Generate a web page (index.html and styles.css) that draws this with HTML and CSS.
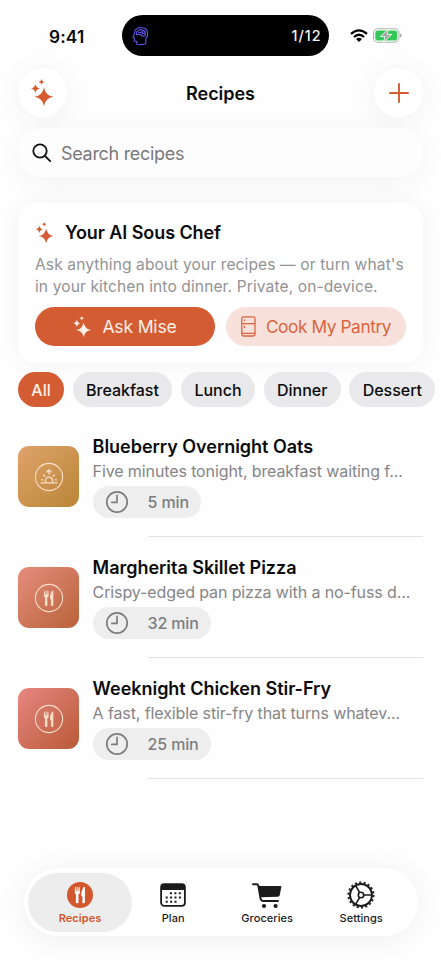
FILE: index.html
```html
<!DOCTYPE html>
<html lang="en">
<head>
<meta charset="utf-8">
<title>Recipes</title>
<link rel="stylesheet" href="styles.css">
</head>
<body>
<svg class="defs" width="0" height="0" aria-hidden="true">
  <symbol id="sparkles" viewBox="0 0 24 28">
    <path d="M13.5 8.5Q14.9 17.1 23.5 18.5Q14.9 19.9 13.5 28Q12.1 19.9 3.5 18.5Q12.1 17.1 13.5 8.5Z"/>
    <path d="M4.6 5Q5.3 9.1 9.4 9.8Q5.3 10.5 4.6 14.6Q3.9 10.5 0 9.8Q3.9 9.1 4.6 5Z"/>
    <path d="M11 0Q11.4 2.6 14 3Q11.4 3.4 11 6Q10.6 3.4 8 3Q10.6 2.6 11 0Z"/>
  </symbol>
  <symbol id="cutlery" viewBox="0 0 12 18">
    <path d="M.3 .6Q.4 0 .8 0T1.3.6L1.5 4.8H2.2L2.4.5Q2.8-.2 3.2.5L3.4 4.8H4.1L4.3.6Q4.4 0 4.8 0T5.3.6L5.7 6Q5.7 7.8 4 8.4L4.3 16.8Q4.2 18 2.8 18T1.3 16.8L1.6 8.4Q0 7.8 0 6Z"/>
    <path d="M11 .4V16.8Q11 18 9.6 18T8.2 16.8L8.5 10.8L7.1 9.8Q7 3.5 10 .3Q10.8-.2 11 .4Z"/>
  </symbol>
  <symbol id="clock" viewBox="0 0 24 24">
    <g fill="none" stroke="currentColor" stroke-width="1.7" stroke-linecap="round" stroke-linejoin="round"><circle cx="12" cy="12" r="10.2"/><path d="M12 5.4V12.4H6.8"/></g>
  </symbol>
</svg>
<div class="screen">
  <div class="status">
    <span class="time">9:41</span>
    <div class="island">
      <svg class="brain" viewBox="0 0 18 20" fill="none" stroke="#5b50d6" stroke-width="1.3" stroke-linejoin="round" stroke-linecap="round">
        <path d="M5 18.5V15.6H3.6Q2.4 15.6 2.4 14.4V11.8L1.1 11.2L2.4 8.2Q2.4 1.2 9.4 1.2Q16.6 1.2 16.6 8.2Q16.6 11 14.6 13V18.2Q10 19.8 5 18.5Z"/>
        <path d="M5 8.2Q4 5 7 4.2Q9 2.4 11 4Q14.2 4 14.2 7.4Q14.4 10.2 11.8 10.2Q9.6 10 9.4 8.3H5M7 6.2H9.6M11 5V7.2H13.4"/>
      </svg>
      <span>1/12</span>
    </div>
    <svg class="wifi" viewBox="0 0 18 13">
      <g fill="none" stroke="#000" stroke-width="2.2"><path d="M1 4.9Q9-2.3 17 4.9"/><path d="M3.9 8Q9 3.5 14.1 8"/></g><path d="M6 10.1Q9 7.6 12 10.1L9 13Z"/>
    </svg>
    <svg class="battery" viewBox="0 0 29 15">
      <rect x=".6" y=".8" width="25.4" height="13.4" rx="4.4" fill="#fff" stroke="#a9b7ac" stroke-width="1.1"/>
      <rect x="2.3" y="2.5" width="22" height="10" rx="2.8" fill="#34c759"/>
      <path d="M27 5.3Q28.6 6 28.6 7.5T27 9.7Z" fill="#aaa"/>
      <path d="M15.6.7L7.4 8.6H12L10.4 14.3L18.7 6.4H14.1Z" fill="#a5a5a5" stroke="#fff" stroke-width=".8"/>
    </svg>
  </div>
  <header class="header">
    <button class="round"><svg class="spark-lg"><use href="#sparkles"/></svg></button>
    <h1>Recipes</h1>
    <button class="round"><svg class="plus" viewBox="0 0 20 20"><path d="M10 1V19M1 10H19" stroke="currentColor" stroke-width="1.9" stroke-linecap="round"/></svg></button>
  </header>
  <div class="search">
    <svg viewBox="0 0 20 20" fill="none" stroke="#111" stroke-width="1.8" stroke-linecap="round"><circle cx="8" cy="8" r="6.7"/><path d="M13 13L18.2 18.2"/></svg>
    <span>Search recipes</span>
  </div>
  <section class="card">
    <div class="card-head"><svg><use href="#sparkles"/></svg><h2>Your AI Sous Chef</h2></div>
    <p>Ask anything about your recipes — or turn what's<br>in your kitchen into dinner. Private, on-device.</p>
    <div class="actions">
      <button class="ask"><svg><use href="#sparkles"/></svg><span>Ask Mise</span></button>
      <button class="pantry"><svg viewBox="0 0 15 21" fill="none" stroke="currentColor" stroke-width="1.3"><rect x=".8" y=".8" width="13.2" height="19.2" rx="1.8"/><path d="M1 7.6H14M1 17.4H14M3.5 3.5V5M3.5 9.7V12"/></svg><span>Cook My Pantry</span></button>
    </div>
  </section>
  <nav class="chips">
    <span class="chip on">All</span><span class="chip breakfast">Breakfast</span><span class="chip lunch">Lunch</span><span class="chip dinner">Dinner</span><span class="chip dessert">Dessert</span>
  </nav>
  <main class="list">
    <article class="row">
      <div class="thumb gold"><svg viewBox="0 0 30 30" fill="none" stroke="currentColor" stroke-width="1.1" stroke-linecap="round"><circle cx="15" cy="15" r="13.6"/><path stroke-width="1.3" d="M7 20.9H23M11.5 20.4V18.7A3.5 3.5 0 0 1 18.5 18.7V20.4M15 12V8.3M12.8 10L15 7.9L17.2 10M9.5 12.9L10.9 14.3M20.5 12.9L19.1 14.3M7.5 17.8H9M21 17.8H22.5"/></svg></div>
      <div class="info"><h3>Blueberry Overnight Oats</h3><p>Five minutes tonight, breakfast waiting f...</p><div class="pill"><svg><use href="#clock"/></svg><span>5 min</span></div></div>
    </article>
    <article class="row">
      <div class="thumb coral"><svg viewBox="0 0 30 30"><circle cx="15" cy="15" r="13.6" fill="none" stroke="currentColor" stroke-width="1.1"/><use href="#cutlery" x="9.7" y="7.2" width="10.5" height="15.8" fill="currentColor"/></svg></div>
      <div class="info"><h3>Margherita Skillet Pizza</h3><p>Crispy-edged pan pizza with a no-fuss d...</p><div class="pill"><svg><use href="#clock"/></svg><span>32 min</span></div></div>
    </article>
    <article class="row">
      <div class="thumb red"><svg viewBox="0 0 30 30"><circle cx="15" cy="15" r="13.6" fill="none" stroke="currentColor" stroke-width="1.1"/><use href="#cutlery" x="9.7" y="7.2" width="10.5" height="15.8" fill="currentColor"/></svg></div>
      <div class="info"><h3>Weeknight Chicken Stir-Fry</h3><p>A fast, flexible stir-fry that turns whatev...</p><div class="pill"><svg><use href="#clock"/></svg><span>25 min</span></div></div>
    </article>
  </main>
  <nav class="tabs">
    <a class="tab active"><svg viewBox="0 0 28 28"><circle cx="14" cy="14" r="13" fill="currentColor"/><use href="#cutlery" x="8.5" y="5.6" width="11.4" height="17" fill="#fff"/></svg><span>Recipes</span></a>
    <a class="tab"><svg viewBox="0 0 28 28"><rect x="2.1" y="3.1" width="23.8" height="21.8" rx="3.2" fill="none" stroke="currentColor" stroke-width="1.8"/><path d="M2 9V5.5Q2 3 5 3H23Q26 3 26 5.5V9Z" fill="currentColor"/><g fill="none" stroke="currentColor" stroke-width="2" stroke-dasharray="2 2.4"><path d="M11 12.3H22M6.7 16.5H22M6.7 20.7H17.5"/></g></svg><span>Plan</span></a>
    <a class="tab"><svg class="cart" viewBox="0 0 30 28"><path d="M6.5 5H28.6Q29.5 5 29.3 6L27.8 14Q27.5 15.6 25.9 15.7L8.6 16.2Z" fill="currentColor"/><path d="M1 3.2H4.8Q6 3.2 6.3 4.5L8.5 17.3Q9 20 11.4 20H26" fill="none" stroke="currentColor" stroke-width="1.9" stroke-linecap="round"/><circle cx="12" cy="25" r="2.1" fill="currentColor"/><circle cx="23.6" cy="25" r="2.1" fill="currentColor"/></svg><span>Groceries</span></a>
    <a class="tab"><svg viewBox="0 0 28 28" fill="none" stroke="currentColor"><circle cx="14" cy="14" r="12.6" stroke-width="1.9" stroke-dasharray="2.1 2.298"/><circle cx="14" cy="14" r="11" stroke-width="1.9"/><circle cx="14" cy="14" r="2.7" stroke-width="1.6"/><path stroke-width="1.6" d="M16.6 14H24.5M12.7 11.7L8.8 4.9M12.7 16.3L8.8 23.1"/></svg><span>Settings</span></a>
  </nav>
</div>
</body>
</html>
```
FILE: styles.css
```css
* { box-sizing: border-box; margin: 0; padding: 0; }
body { width: 441px; height: 960px; overflow: hidden; background: #fefefe; font-family: Inter, "Liberation Sans", sans-serif; color: #0b0b0c; }
button { border: 0; background: none; font: inherit; color: inherit; }
svg { display: block; flex: none; }
span { white-space: nowrap; }
.defs { position: absolute; }
.screen { display: flex; flex-direction: column; width: 441px; height: 960px; }

.status { display: flex; align-items: center; height: 41px; margin-top: 15px; flex: none; }
.time { width: 73px; margin-left: 49px; padding-top: 1px; font-size: 17.3px; font-weight: 600; letter-spacing: .15px; }
.island { display: flex; align-items: center; justify-content: space-between; width: 207px; height: 41px; padding: 0 7.5px 0 10px; border-radius: 21px; background: #000; color: #f4f4f4; font-size: 14.3px; font-weight: 500; letter-spacing: 1px; }
.brain { width: 17px; height: 20px; }
.wifi { width: 18px; height: 13px; margin-left: 20.5px; }
.battery { width: 29px; height: 15px; margin-left: 5px; }

.header { display: flex; align-items: center; justify-content: space-between; height: 49px; margin: 12px 18px 0; flex: none; }
.round { display: grid; place-items: center; width: 49px; height: 49px; border-radius: 50%; background: #fff; color: #d45b32; fill: currentColor; box-shadow: 0 3px 30px rgba(0,0,0,.06); }
.spark-lg { width: 23px; height: 27px; }
.plus { width: 20px; height: 20px; }
h1 { font-size: 18px; font-weight: 600; letter-spacing: -.05px; line-height: 24px; padding-top: 2px; }

.search { display: flex; align-items: center; gap: 9px; height: 49px; margin: 11px 18px 0; padding-left: 14px; flex: none; border-radius: 25px; background: #fdfdfd; box-shadow: 0 4px 30px rgba(0,0,0,.05); color: #79797b; font-size: 18px; letter-spacing: -.3px; }
.search svg { width: 20px; height: 20px; }
.search span { padding-top: 1px; }

.card { height: 160px; margin: 26px 18px 0; padding: 18px 17px 0; flex: none; border-radius: 18px; background: #fff; box-shadow: 0 0 24px rgba(0,0,0,.05); }
.card-head { display: flex; align-items: center; gap: 10px; height: 23px; }
.card-head svg { width: 20px; height: 21px; fill: #d45b32; }
h2 { font-size: 18px; font-weight: 600; letter-spacing: -.08px; white-space: nowrap; }
.card p { height: 44px; margin-top: 10px; color: #939395; font-size: 15.6px; letter-spacing: .09px; line-height: 22px; white-space: nowrap; }
.actions { display: flex; gap: 11px; margin-top: 9px; }
.actions button { display: flex; align-items: center; justify-content: center; width: 180px; height: 39px; gap: 10px; border-radius: 20px; font-size: 17.6px; letter-spacing: -.2px; }
.ask { background: #d45c33; color: #fff0e8; fill: currentColor; }
.ask svg { width: 19px; height: 21px; }
.actions .pantry { background: #f8e1da; color: #d8653f; font-size: 17.3px; letter-spacing: -.42px; }
.pantry svg { width: 15px; height: 21px; }

.chips { display: flex; gap: 8.7px; height: 35px; margin: 9px 0 0 18px; flex: none; }
.chip { display: grid; place-items: center; flex: none; height: 35px; border-radius: 18px; background: #e9e9eb; font-size: 16px; font-weight: 500; letter-spacing: -.02px; }
.chip.on { width: 46px; background: #d45c33; color: #fff0e8; }
.breakfast { width: 99.6px; }
.lunch { width: 74px; }
.dinner { width: 77px; }
.dessert { width: 86px; }

.list { display: flex; flex-direction: column; margin: 9px 18px 0; }
.row { position: relative; display: flex; align-items: center; gap: 13.6px; height: 121px; }
.row::after { content: ""; position: absolute; left: 130px; right: 0; bottom: 0; height: 1px; background: #e3e3e4; }
.thumb { display: grid; place-items: center; width: 61px; height: 61px; border-radius: 11px; color: #f9dfc9; }
.thumb svg { width: 30px; height: 30px; }
.gold { background: linear-gradient(135deg, #dfa36b, #b98535); }
.coral { background: linear-gradient(135deg, #e58d7c, #b96239); }
.red { background: linear-gradient(135deg, #e78682, #b85a36); }
.info { flex: 1; height: 85px; }
h3 { height: 25px; padding-top: 1px; font-size: 18px; line-height: 24px; font-weight: 600; letter-spacing: -.03px; white-space: nowrap; }
.info p { height: 24px; color: #858587; font-size: 16px; line-height: 24px; letter-spacing: -.11px; white-space: nowrap; }
.pill { display: inline-flex; align-items: center; height: 32px; margin-top: 3px; padding: 0 12px; gap: 19px; border-radius: 16px; background: #eee; color: #7d7d7f; font-size: 16px; font-weight: 500; letter-spacing: -.15px; }
.pill svg { width: 24px; height: 24px; }

.tabs { display: flex; width: 394px; height: 68px; margin: auto 0 24px 24px; padding: 4.5px 4px; flex: none; border-radius: 34px; background: #fff; box-shadow: 0 3px 30px rgba(0,0,0,.065); color: #1b1b1c; }
.tab { display: flex; flex-direction: column; align-items: center; width: 94px; height: 59px; padding-top: 8px; font-size: 11px; font-weight: 500; letter-spacing: .05px; }
.tab svg { width: 28px; height: 28px; }
.tab .cart { width: 30px; }
.tab span { margin-top: 2px; line-height: 14px; }
.active { width: 104px; margin-right: -5.8px; border-radius: 30px; background: #ededed; color: #d2572c; font-weight: 600; }
```
